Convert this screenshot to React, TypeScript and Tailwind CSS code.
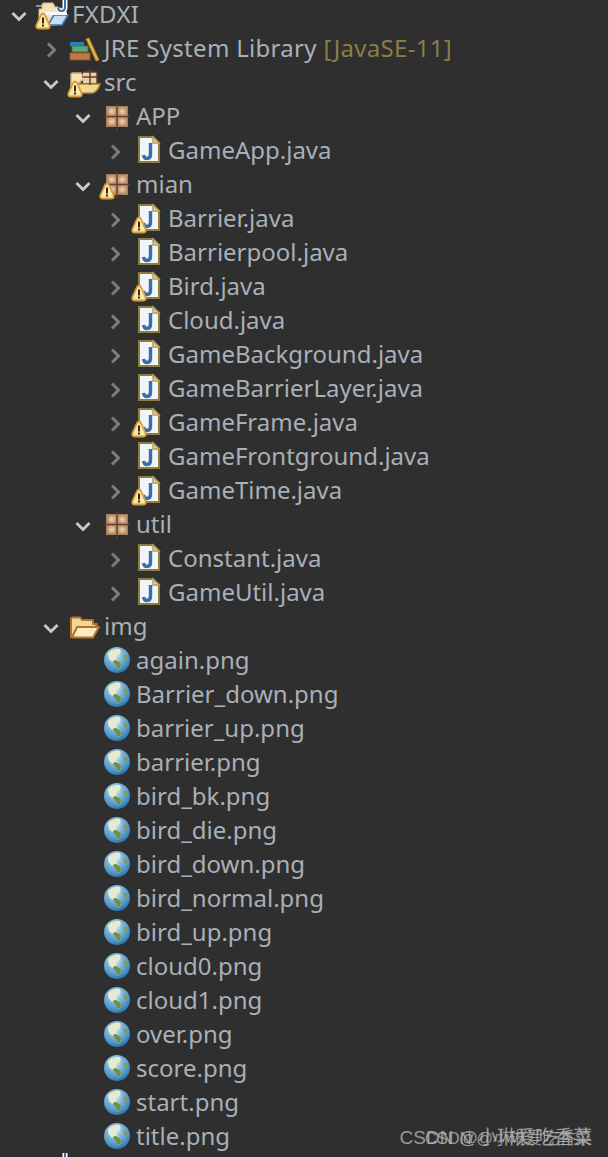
import React from "react";

type Kind = "project" | "library" | "src" | "pkg" | "java" | "folder" | "globe";
type Item = { t: string; l: 0 | 1 | 2 | 3; k: Kind; c?: "open" | "closed"; w?: boolean; extra?: string; wide?: boolean };

const items: Item[] = [
  { t: "FXDXI", l: 0, k: "project", c: "open", w: true, wide: true },
  { t: "JRE System Library ", l: 1, k: "library", c: "closed", extra: "[JavaSE-11]", wide: true },
  { t: "src", l: 1, k: "src", c: "open", w: true },
  { t: "APP", l: 2, k: "pkg", c: "open" },
  { t: "GameApp.java", l: 3, k: "java", c: "closed" },
  { t: "mian", l: 2, k: "pkg", c: "open", w: true },
  { t: "Barrier.java", l: 3, k: "java", c: "closed", w: true },
  { t: "Barrierpool.java", l: 3, k: "java", c: "closed" },
  { t: "Bird.java", l: 3, k: "java", c: "closed", w: true },
  { t: "Cloud.java", l: 3, k: "java", c: "closed" },
  { t: "GameBackground.java", l: 3, k: "java", c: "closed" },
  { t: "GameBarrierLayer.java", l: 3, k: "java", c: "closed" },
  { t: "GameFrame.java", l: 3, k: "java", c: "closed", w: true },
  { t: "GameFrontground.java", l: 3, k: "java", c: "closed" },
  { t: "GameTime.java", l: 3, k: "java", c: "closed", w: true },
  { t: "util", l: 2, k: "pkg", c: "open" },
  { t: "Constant.java", l: 3, k: "java", c: "closed" },
  { t: "GameUtil.java", l: 3, k: "java", c: "closed" },
  { t: "img", l: 1, k: "folder", c: "open" },
  ...[
    "again.png", "Barrier_down.png", "barrier_up.png", "barrier.png", "bird_bk.png", "bird_die.png",
    "bird_down.png", "bird_normal.png", "bird_up.png", "cloud0.png", "cloud1.png", "over.png",
    "score.png", "start.png", "title.png",
  ].map((t): Item => ({ t, l: 2, k: "globe" })),
  { t: "", l: 0, k: "project" },
];

const pad = ["pl-[10px]", "pl-[42px]", "pl-[74px]", "pl-[106px]"];

function Chevron({ c }: { c?: "open" | "closed" }) {
  return (
    <svg width="20" height="34" viewBox="0 0 20 34" fill="none" className="shrink-0">
      {c === "open" && <path d="M2.5 16 L9 22.5 L15.5 16" stroke="#c9c9c9" strokeWidth="3" />}
      {c === "closed" && <path d="M6 12.5 L12.5 19 L6 25.5" stroke="#7d7d7d" strokeWidth="3" />}
    </svg>
  );
}

function Icon({ k }: { k: Kind }) {
  const common = { width: 42, height: 34, viewBox: "0 0 42 34", className: "absolute left-0 top-0 overflow-visible" };
  if (k === "java")
    return (
      <svg {...common}>
        <path d="M13 4 H27 L33 10 V29 H13 Z" fill="#f0f5fb" stroke="#8f7d3d" strokeWidth="2" />
        <path d="M27 4 V10 H33 Z" fill="#e3d49a" stroke="#b9a25a" strokeWidth="1.5" />
        <path d="M24.5 10 V21 Q24.5 25.5 21 25.5 Q18 25.5 17.5 22" fill="none" stroke="#3a6ea5" strokeWidth="3.4" />
      </svg>
    );
  if (k === "pkg")
    return (
      <svg {...common}>
        <defs>
          <radialGradient id="pk">
            <stop offset="0" stopColor="#ecdcae" />
            <stop offset="1" stopColor="#b98f6c" />
          </radialGradient>
        </defs>
        <rect x="12" y="7" width="22" height="21" fill="#a87e5e" />
        <rect x="13" y="8" width="9.5" height="9" fill="url(#pk)" />
        <rect x="23.5" y="8" width="9.5" height="9" fill="url(#pk)" />
        <rect x="13" y="18" width="9.5" height="9" fill="url(#pk)" />
        <rect x="23.5" y="18" width="9.5" height="9" fill="url(#pk)" />
        <path d="M23 5 V31 M10 17.5 H36" stroke="#6e3b30" strokeWidth="1.4" />
      </svg>
    );
  if (k === "globe")
    return (
      <svg {...common}>
        <defs>
          <radialGradient id="gl" cx="0.42" cy="0.3" r="0.8">
            <stop offset="0" stopColor="#f0f4f0" />
            <stop offset="0.3" stopColor="#8fc0dc" />
            <stop offset="0.75" stopColor="#3f8cc4" />
            <stop offset="1" stopColor="#24588c" />
          </radialGradient>
        </defs>
        <circle cx="23" cy="17" r="13" fill="url(#gl)" />
        <path d="M14 10 Q20 5 26 6 Q28 10 24 12 Q21 13 22 16 Q25 17 27 21 Q27 25 24 27 Q22 22 19 19 Q14 17 14 10 Z" fill="#e6ebd2" />
        <path d="M20 17 Q25 17 27 21 Q27 25 24 27 Q22 22 19 19 Z" fill="#6f8f48" />
        <path d="M30 11 Q34 14 34 18 Q31 17 29 14 Z" fill="#7f9c58" />
      </svg>
    );
  if (k === "folder")
    return (
      <svg {...common}>
        <path d="M9 28 V10 Q9 8.5 11 8.5 H18 L20 11 H31 V15 H35 L30 28 Z" fill="#f3d699" stroke="#b0752c" strokeWidth="2" strokeLinejoin="round" />
        <path d="M10 28.5 L15 18 H37 L31 28.5 Z" fill="#fbeac3" stroke="#b0752c" strokeWidth="2" strokeLinejoin="round" />
      </svg>
    );
  if (k === "src")
    return (
      <svg {...common}>
        <path d="M9 27 V10 Q9 8 11 8 H19 L20 10 H24 V15 H20 Z" fill="#f5e3b4" stroke="#d0b06e" strokeWidth="1.5" />
        <path d="M10 28 L14 19 H38 Q36 26 31 28 Z" fill="#f4d88f" stroke="#a98a3a" strokeWidth="1.5" />
        <rect x="21" y="7" width="14" height="11" fill="#e6d0a8" />
        <path d="M28 4 V20 M20 12 H36 M21 7 H35 V18" fill="none" stroke="#6e3b30" strokeWidth="1.5" />
      </svg>
    );
  if (k === "library")
    return (
      <svg {...common}>
        <rect x="8" y="11" width="14" height="4" fill="#2b7fc0" />
        <rect x="10" y="15" width="16" height="6" fill="#5fa877" stroke="#3c7a4e" strokeWidth="1" />
        <rect x="8" y="22" width="20" height="7" fill="#c27a45" stroke="#96552a" strokeWidth="1" />
        <path d="M24 8 L27 7 L37 29 L34 30 Z" fill="#eab544" stroke="#a8722a" strokeWidth="1" />
      </svg>
    );
  return (
    <svg {...common}>
      <path d="M6 9 H12" stroke="#8d8da0" strokeWidth="2" />
      <path d="M9 28 V12 H12 V8 Q12 6 14 6 H23 L25 10 H28 V15 H33 L27 28 Z" fill="#f5e2b4" stroke="#d8bd82" strokeWidth="1" />
      <path d="M18 28 L24 18 H38 L32 28 Z" fill="#c9dcf6" stroke="#4a70b8" strokeWidth="1.6" />
      <path d="M14 15 H37 V18 H16 Z" fill="#f7f7f7" />
      <path d="M35 0 V10 Q35 14 31.5 14 Q28.5 14 28 11" fill="none" stroke="#ffffff" strokeWidth="5" />
      <path d="M35 0 V10 Q35 14 31.5 14 Q28.5 14 28 11" fill="none" stroke="#3a6ea5" strokeWidth="2" />
    </svg>
  );
}

function Warn() {
  return (
    <svg width="16" height="18" viewBox="0 0 16 18" className="absolute left-[5px] top-[15px] overflow-visible">
      <path d="M8 1.5 Q9.5 1.5 10.5 4 L14.5 13 Q15.5 16.5 12.5 16.5 H3.5 Q0.5 16.5 1.5 13 L5.5 4 Q6.5 1.5 8 1.5 Z" fill="#fbe7a8" stroke="#d99a3c" strokeWidth="1.8" />
      <rect x="7" y="5.5" width="2" height="6" fill="#3a2a12" />
      <rect x="7" y="12.5" width="2" height="2" fill="#3a2a12" />
    </svg>
  );
}

export default function App() {
  return (
    <div className="relative h-[1157px] w-[608px] overflow-hidden bg-[#2f2f2f] font-['Noto_Sans','Open_Sans',sans-serif] text-[24px] text-[#a8b0b8]">
      <div className="-mt-[3px] flex flex-col">
        {items.map((it, i) => (
          <div key={i} className={`flex h-[34px] shrink-0 items-center ${pad[it.l]}`}>
            <Chevron c={it.c} />
            <span className="relative h-[34px] w-[42px] shrink-0">
              <Icon k={it.k} />
              {it.w && <Warn />}
            </span>
            <span className={`whitespace-pre leading-[34px] ${it.wide ? "tracking-[0.3px]" : ""}`}>
              {it.t}
              {it.extra && <span className="text-[#8a7d4a]">{it.extra}</span>}
            </span>
          </div>
        ))}
      </div>
      <span className="absolute right-[16px] top-[1126px] whitespace-nowrap font-['Liberation_Sans','Noto_Sans_CJK_SC',sans-serif] text-[19px] leading-[24px] text-[#b4b4b4] opacity-80">
        CSDN @小琳爱吃香菜
      </span>
      <span className="absolute right-[16px] top-[1126px] whitespace-nowrap font-['Liberation_Sans','Noto_Sans_CJK_SC',sans-serif] text-[16.5px] leading-[24px] text-[#b4b4b4] opacity-80">
        CSDN @小琳爱吃香菜
      </span>
    </div>
  );
}
